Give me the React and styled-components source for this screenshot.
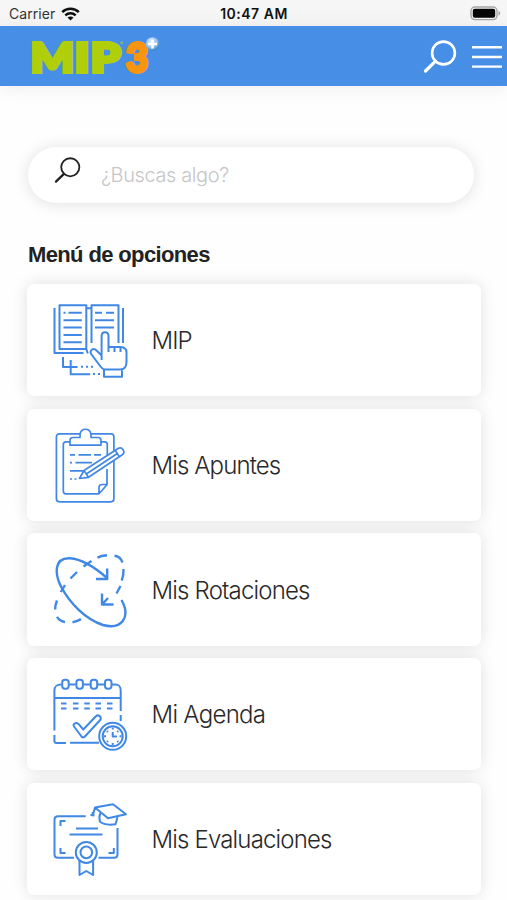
import styled, { createGlobalStyle } from 'styled-components';

export default function App() {
  return (
    <Screen>
      <GlobalStyle />
      <StatusBar>
        <Carrier>
          Carrier
          <WifiIcon />
        </Carrier>
        <Clock>10:47 AM</Clock>
        <BatteryIcon />
      </StatusBar>
      <Header>
        <Logo />
        <HeaderActions>
          <IconButton aria-label="Buscar">
            <SearchIcon size={34} weight={2.6} />
          </IconButton>
          <IconButton aria-label="Menú">
            <MenuIcon />
          </IconButton>
        </HeaderActions>
      </Header>
      <Content>
        <SearchBox>
          <SearchIcon size={27} weight={2.3} />
          <SearchInput placeholder="¿Buscas algo?" />
        </SearchBox>
        <Title>Menú de opciones</Title>
        <MenuList>
          {options.map(({ label, Icon, spacing }) => (
            <MenuItem key={label}>
              <MenuPicture viewBox="0 0 80 80">
                <Icon />
              </MenuPicture>
              <MenuLabel $spacing={spacing}>{label}</MenuLabel>
            </MenuItem>
          ))}
        </MenuList>
      </Content>
    </Screen>
  );
}

function WifiIcon() {
  return (
    <svg width="19" height="14" viewBox="0 0 19 14" fill="none" stroke="#111" strokeWidth="2.5">
      <path d="M1.2 5.1C5.8.7 13.2.7 17.8 5.1" />
      <path d="M4.3 8.3c3-2.8 7.4-2.8 10.4 0" />
      <path d="M9.5 13.6 6.5 10.6c1.8-1.6 4.2-1.6 6 0z" fill="#111" stroke="none" />
    </svg>
  );
}

function BatteryIcon() {
  return (
    <svg width="31" height="15" viewBox="0 0 31 15">
      <rect x="1" y="1" width="26" height="12.6" rx="4" fill="#f6f6f6" stroke="#a5a5a5" strokeWidth="1.4" />
      <rect x="2.8" y="2.8" width="22.4" height="9" rx="2" fill="#050505" />
      <path d="M28.5 4.8c2.2.9 2.2 4.1 0 5z" fill="#a5a5a5" />
    </svg>
  );
}

function SearchIcon({ size, weight }) {
  return (
    <svg width={size} height={size} viewBox="0 0 34 34" fill="none" stroke="currentColor" strokeWidth={weight} strokeLinecap="round">
      <circle cx="20.5" cy="13" r="11.4" />
      <path d="M12.5 21.2 2.5 31" strokeWidth={weight * 1.25} />
    </svg>
  );
}

function MenuIcon() {
  return (
    <svg width="32" height="26" viewBox="0 0 32 26" fill="none" stroke="currentColor" strokeWidth="2.4">
      <path d="M1 3.2h30M1 13h30M1 22.6h30" />
    </svg>
  );
}

function Logo() {
  return (
    <LogoPicture viewBox="0 0 136 60">
      <defs>
        <radialGradient id="plus" cx="40%" cy="30%" r="75%">
          <stop offset="0" stopColor="#dcecfa" />
          <stop offset="0.6" stopColor="#8fc0ee" />
          <stop offset="1" stopColor="#2d78be" />
        </radialGradient>
      </defs>
      <LogoText x="-0.5" y="46.2" textLength="43.5" fill="#b0ce0a" stroke="#b0ce0a">M</LogoText>
      <LogoText x="43.6" y="46.2" textLength="15" fill="#b0ce0a" stroke="#b0ce0a">I</LogoText>
      <LogoText x="59.5" y="46.2" textLength="30" fill="#b0ce0a" stroke="#b0ce0a">P</LogoText>
      <LogoText x="95" y="46.2" textLength="22" fill="#f79410" stroke="#f79410">3</LogoText>
      <circle cx="90.8" cy="16.8" r="1.5" fill="#85b770" />
      <circle cx="121.5" cy="18" r="6.8" fill="url(#plus)" />
      <path d="M121.5 13.5v9M117 18h9" stroke="#fff" strokeWidth="2.6" />
    </LogoPicture>
  );
}

function BookIcon() {
  return (
    <>
      <path d="M9.5 49V5.2h26.8V49zM36.3 8.3h5M41.5 43V5.2h27V43M73 8v35M4.5 8v45h29M36.3 49l1.5 4.5" />
      <path d="M13.5 12.8h2M18.5 12.8h13.3M13.5 20.2h18.3M13.5 27.6h18.3M13.5 35h18.3M13.5 42.2h18.3M45 12.8h7M56 12.8h8M45 20.2h19M45 27.6h19" />
      <path d="M13 57v10h14.5M20.7 60v14.2h19.5" />
      <path d="M31 66.8h2M36 66.8h2M41 66.8h2M43 74h2M48 74h2" />
      <path
        d="M51.6 60V36c0-5 6.9-5 6.9 0v11h12c4 0 6 2 6 5.5v9c0 5-2 8-6 8H55c-2 0-4-2-6-5l-7.5-10c-3-4 2-7.5 5-4l5.1 5M58.5 46.5V52M64.5 47v5M70.5 48v4M54 69.5h18v7.2H54z"
        fill="#fff"
      />
    </>
  );
}

function ClipboardIcon() {
  return (
    <g strokeWidth="1.7">
      <rect x="6.4" y="8.8" width="57.5" height="68" rx="3" />
      <path d="M20 16.8h-4c-2 0-2.7.8-2.7 2.7V66c0 2 .8 2.8 2.7 2.8h33l8-9V44M57.3 31V19.5c0-2-.8-2.7-2.7-2.7h-4M49 68.5v-6c0-2 1-3 3-3h5" />
      <path d="M20 20.2v-5c0-2 1-2.7 3-2.7h7v-3c1-7 10-7 11 0v3h7c2 0 3 .7 3 2.7v5z" fill="#fff" />
      <path d="M20 29.8h5M28.5 29.8H41M44 29.8h7M20 37.6h2M25.5 37.6H42M20 45.8h13M20 54h2M24.5 54h2" />
      <path d="M29.5 53.5 34 45.5 68 23.5c4-2.5 8 3.5 4.3 6.2L38.5 52.3zM34 45.5l4.5 6.8M65.2 25.5l4.2 6.3M37 48.5l30-19.8" fill="#fff" />
    </g>
  );
}

function RotationIcon() {
  return (
    <g strokeWidth="2.4">
      <path d="M57 28C42 15 31 9 20 8.3 3 7.5 5 25 11.5 37.5 20 53 35 69 53 75c19 5 28-8 18.5-25" />
      <path d="M57.2 18.5V29H46" />
      <path d="M73.5 19c.2 4-.4 8-1.8 11.5M72.5 12.5c-1.5-4.5-4-6.3-8-6.8M57 5.3c-4 .3-7 1-9.5 2.3M41.5 11 33.5 16.5M27 22l-6.5 6.5M15 35 10.8 42M7 50.5c-1.6 4-2 6-1.8 9M7 66.8c2 3.2 4 4.5 8 5.2M22.5 72.3c3.5-.5 6-1.8 8.5-3.2M70.5 36 66.5 43.5" />
      <path d="M52 43.5V54.5h11.5M52.5 54l5.5-6" />
    </g>
  );
}

function CalendarIcon() {
  return (
    <>
      <path d="M4.4 56.5V17c0-5 2-6.6 7-6.6M19.3 10.4h6.5M33.6 10.4h6.3M48 10.4h6.2M62 10.4h3c4.5 0 5.7 2 5.7 6.6v20M4.4 24h66.3M70.7 41v6M4.4 61v6c0 1.3.7 2 2 2H16M20 68.8h29" />
      {[12.2, 26.4, 40.7, 55].map((x) => (
        <rect key={x} x={x} y="5.7" width="6.5" height="9" rx="2.7" />
      ))}
      {[11, 23, 34.3, 45.5, 57].map((x) => (
        <path key={x} d={`M${x} 29.6h5.5M${x} 34.6h5.5`} />
      ))}
      <path d="m24 52.5 7.5 10c1 1.2 2.3 1 3.2.2L50.2 46c2-3-1.5-6-4.3-3.8L33.3 55.5l-4.6-5.3c-3-2.4-6.3-.2-4.7 2.3z" />
      <circle cx="62.7" cy="62.3" r="13.5" fill="#fff" />
      <circle cx="62.7" cy="62.3" r="10" />
      <path d="M62.7 53.5v2M62.7 69v2M54 62.3h2M69.5 62.3h2M62.7 58v4.5h4.2M57 57l1 1M68.3 57l-1 1M57 68l1-1M68.3 68l-1-1" />
    </>
  );
}

function DiplomaIcon() {
  return (
    <>
      <path d="M35.7 17.2H8c-2.5 0-3.5 1-3.5 3.5v34.5c0 2.5 1 3.5 3.5 3.5h16M48.5 58.8H64c2.5 0 3.5-1 3.5-3.5V29" />
      <path d="M10.5 27v-5h5M10.5 49v5h5M58.5 54h5.3v-5M26 29.5h22M19.5 35.6h33" />
      <path d="M29.5 59v17l6.8-4 6.8 4V59" />
      <circle cx="36.3" cy="53.4" r="10.5" fill="#fff" />
      <circle cx="36.3" cy="53.4" r="5.8" />
      <path d="M45 8.6 63 5.3l13 9.9-18 4.1zM50.5 14c-2 4-1 7-.5 8.8 3 2.3 9 3.4 15.5 2.4l2-7M45 8.6l-2.3 8M40.5 16l4 .5M42.7 13v4" />
    </>
  );
}

const options = [
  { label: 'MIP', Icon: BookIcon, spacing: '-0.9px' },
  { label: 'Mis Apuntes', Icon: ClipboardIcon, spacing: '-0.88px' },
  { label: 'Mis Rotaciones', Icon: RotationIcon, spacing: '-0.82px' },
  { label: 'Mi Agenda', Icon: CalendarIcon, spacing: '-0.7px' },
  { label: 'Mis Evaluaciones', Icon: DiplomaIcon, spacing: '-0.84px' },
];

const GlobalStyle = createGlobalStyle`
  * {
    box-sizing: border-box;
  }

  body {
    margin: 0;
    background-color: #fefefe;
    font-family: Inter, 'Liberation Sans', sans-serif;
  }
`;

const Screen = styled.div`
  height: 900px;
  overflow: hidden;
`;

const StatusBar = styled.div`
  display: grid;
  grid-template-columns: 1fr auto 1fr;
  align-items: center;
  height: 25.5px;
  padding: 2px 6px 0 9px;
  background-color: #f6f6f6;
  color: #111;
  font-size: 14px;

  > svg {
    justify-self: end;
  }
`;

const Carrier = styled.div`
  display: flex;
  align-items: center;
  gap: 6px;
  letter-spacing: 0.05px;
  color: #333;
`;

const Clock = styled.div`
  margin-right: 2px;
  font-weight: 600;
  letter-spacing: 0.5px;
`;

const Header = styled.header`
  display: flex;
  justify-content: space-between;
  align-items: center;
  height: 60.5px;
  padding: 0 4px 0 31px;
  background-color: #478ee6;
  box-shadow: 0 2px 18px rgba(0, 0, 0, 0.07);
`;

const LogoPicture = styled.svg`
  width: 136px;
  height: 60px;
`;

const LogoText = styled.text.attrs({ lengthAdjust: 'spacingAndGlyphs' })`
  font-family: Lato, sans-serif;
  font-size: 40.5px;
  font-weight: 900;
  stroke-width: 3.8px;
`;

const HeaderActions = styled.div`
  display: flex;
  align-items: center;
  gap: 14px;
`;

const IconButton = styled.button`
  display: flex;
  padding: 2px 0 0;
  border: unset;
  background-color: unset;
  color: #fff;
  cursor: pointer;
`;

const Content = styled.main`
  padding: 60.5px 26px 0 27px;
`;

const SearchBox = styled.div`
  display: flex;
  gap: 20px;
  width: 446px;
  height: 56px;
  margin-left: 1px;
  padding: 10px 24px 0 26px;
  border-radius: 28px;
  background-color: #fff;
  box-shadow: 0 1px 16px rgba(0, 0, 0, 0.12);
  color: #222;
`;

const SearchInput = styled.input`
  flex: 1;
  height: 37px;
  padding: 0;
  border: none;
  outline: none;
  background: none;
  font-family: Inter, sans-serif;
  font-size: 20px;
  font-weight: 300;
  letter-spacing: -0.4px;

  &::placeholder {
    color: #c6c6c6;
  }
`;

const Title = styled.h1`
  margin: 39.5px 0 16px 1px;
  color: #222;
  font-family: 'Liberation Sans', Arial, sans-serif;
  font-size: 22px;
  line-height: 26px;
  font-weight: 700;
  letter-spacing: -0.63px;
`;

const MenuList = styled.div`
  display: flex;
  flex-direction: column;
  gap: 12.3px;
`;

const MenuItem = styled.a`
  display: flex;
  align-items: center;
  gap: 21.5px;
  flex-shrink: 0;
  height: 112.4px;
  padding: 0 23px;
  border-radius: 7px;
  background-color: #fff;
  box-shadow: 0 0 16px rgba(0, 0, 0, 0.12);
  cursor: pointer;
`;

const MenuPicture = styled.svg`
  width: 80px;
  height: 80px;
  fill: none;
  stroke: #4088e4;
  stroke-width: 2px;
  stroke-linejoin: round;
`;

const MenuLabel = styled.span`
  padding-top: 1px;
  color: #292929;
  font-size: 24px;
  font-weight: 300;
  letter-spacing: ${({ $spacing }) => $spacing};
`;
